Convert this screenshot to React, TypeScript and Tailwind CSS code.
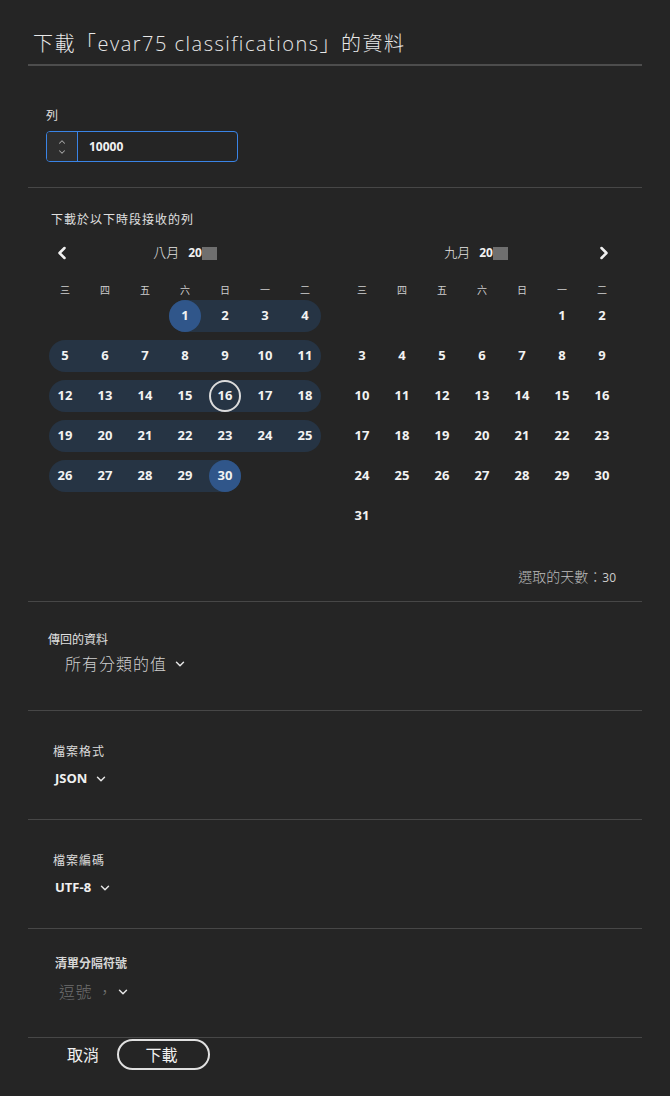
import { ChevronLeft, ChevronRight, ChevronDown, ChevronUp } from 'lucide-react';
import clsx from 'clsx';

const cjk = { fontFamily: '"Open Sans", "Noto Sans CJK TC", sans-serif' };

const weekdays = ['三', '四', '五', '六', '日', '一', '二'];

function buildRows(startCol: number, total: number): (number | null)[][] {
  const rows: (number | null)[][] = [];
  let row: (number | null)[] = Array(startCol).fill(null);
  for (let d = 1; d <= total; d++) {
    row.push(d);
    if (row.length === 7) {
      rows.push(row);
      row = [];
    }
  }
  if (row.length) {
    while (row.length < 7) row.push(null);
    rows.push(row);
  }
  return rows;
}

function DayCell({
  day,
  inRange,
  selected,
  today,
  roundLeft,
  roundRight,
}: {
  day: number | null;
  inRange?: boolean;
  selected?: boolean;
  today?: boolean;
  roundLeft?: boolean;
  roundRight?: boolean;
}) {
  if (day === null) return <div className="h-10" />;
  return (
    <div className="relative flex h-10 items-center justify-center">
      {inRange && (
        <div
          className={clsx(
            'absolute inset-y-1 bg-[#263444]',
            roundLeft ? 'left-1 rounded-l-full' : 'left-0',
            roundRight ? 'right-1 rounded-r-full' : 'right-0'
          )}
        />
      )}
      <span
        className={clsx(
          'relative flex h-8 w-8 items-center justify-center rounded-full text-[13px] font-bold text-[#f2f2f2]',
          selected && 'bg-[#30568a]',
          today && 'border-2 border-[#dcdcdc]'
        )}
      >
        {day}
      </span>
    </div>
  );
}

function MonthHeader({ name }: { name: string }) {
  return (
    <div className="flex items-center gap-[9px]">
      <span className="text-[13px] font-light text-[#e6e6e6]">{name}</span>
      <span className="flex items-center text-[12px] font-bold text-[#f0f0f0]">
        20
        <span className="inline-block h-[13px] w-[15px] bg-[#6f6f6f]" />
      </span>
    </div>
  );
}

function Calendar({
  name,
  startCol,
  total,
  range,
  today,
  nav,
}: {
  name: string;
  startCol: number;
  total: number;
  range?: [number, number];
  today?: number;
  nav: 'left' | 'right';
}) {
  const rows = buildRows(startCol, total);
  return (
    <div className="w-[280px]">
      <div
        className={clsx(
          'relative flex h-[26px] items-center justify-center',
          nav === 'right' && 'pr-[12px]'
        )}
      >
        {nav === 'left' ? (
          <ChevronLeft className="absolute left-[7px] h-5 w-5 text-[#f0f0f0]" strokeWidth={3} />
        ) : (
          <ChevronRight className="absolute right-[8px] h-5 w-5 text-[#f0f0f0]" strokeWidth={3} />
        )}
        <MonthHeader name={name} />
      </div>
      <div className="mt-[18px] grid h-3 grid-cols-7 items-center text-center text-[10px] leading-3 text-[#cfcfcf]">
        {weekdays.map((w) => (
          <span key={w}>{w}</span>
        ))}
      </div>
      <div>
        {rows.map((row, ri) => {
          const days = row.filter((d): d is number => d !== null);
          const first = days[0];
          const last = days[days.length - 1];
          return (
            <div key={ri} className="grid grid-cols-7">
              {row.map((d, ci) => {
                const inRange = !!range && d !== null && d >= range[0] && d <= range[1];
                return (
                  <DayCell
                    key={ci}
                    day={d}
                    inRange={inRange}
                    selected={!!range && (d === range[0] || d === range[1])}
                    today={d === today}
                    roundLeft={d === first || (!!range && d === range[0])}
                    roundRight={d === last || (!!range && d === range[1])}
                  />
                );
              })}
            </div>
          );
        })}
      </div>
    </div>
  );
}

function Dropdown({ value, muted }: { value: string; muted?: boolean }) {
  return (
    <div className={clsx('flex items-center', muted ? 'gap-[3px]' : 'gap-[6px]')}>
      <span
        className={clsx(
          'text-[16px] font-light',
          muted ? 'text-[#707070] tracking-[0.5px]' : 'text-[#cfcfcf] tracking-[1px]'
        )}
      >
        {value}
      </span>
      <ChevronDown className="h-[14px] w-[14px] text-[#e6e6e6]" strokeWidth={2.5} />
    </div>
  );
}

function Select({ value }: { value: string }) {
  return (
    <div className="flex items-center gap-[7px]">
      <span className="text-[13px] font-bold text-[#f0f0f0]">{value}</span>
      <ChevronDown className="h-[14px] w-[14px] text-[#e6e6e6]" strokeWidth={2.5} />
    </div>
  );
}

export default function App() {
  return (
    <div className="min-h-[1096px] bg-[#252525] text-[#e6e6e6]" style={cjk}>
      <div className="mx-[28px]">
        {/* Title */}
        <div className="border-b-2 border-[#4d4d4d] pb-[6px] pl-[5px] pt-[30px]">
          <h1 className="text-[20px] font-light leading-[28px] tracking-[1.5px] text-[#e8e8e8]">
            下載「evar75 classifications」的資料
          </h1>
        </div>

        {/* Rows */}
        <div className="border-b border-[#474747] pb-[25px] pl-[18px] pt-[42px]">
          <div className="text-[12px] leading-4 text-[#e0e0e0]">列</div>
          <div className="mt-[7px] flex h-[31px] w-[192px] overflow-hidden rounded-[4px] border border-[#3a84e6]">
            <div className="flex w-[31px] flex-col items-center justify-center border-r border-[#3a84e6] bg-[#2e2e2e]">
              <ChevronUp className="h-[10px] w-[10px] text-[#a8a8a8]" strokeWidth={2.5} />
              <ChevronDown className="h-[10px] w-[10px] text-[#a8a8a8]" strokeWidth={2.5} />
            </div>
            <div className="flex items-center pl-[11px] text-[12px] font-bold text-[#f2f2f2]">10000</div>
          </div>
        </div>

        {/* Date range */}
        <div className="border-b border-[#474747] pb-[14px] pt-[24px]">
          <div className="pl-[23px] text-[12px] leading-4 tracking-[1px] text-[#e0e0e0]">下載於以下時段接收的列</div>
          <div className="mt-[12px] flex gap-[17px] pl-[17px]">
            <Calendar name="八月" startCol={3} total={30} range={[1, 30]} today={16} nav="left" />
            <Calendar name="九月" startCol={5} total={31} nav="right" />
          </div>
          <div className="mt-[30px] flex items-baseline justify-end pr-[26px]">
            <span className="text-[14px] font-light text-[#bdbdbd]">選取的天數：</span>
            <span className="text-[12px] text-[#cfcfcf]">30</span>
          </div>
        </div>

        {/* Returned data */}
        <div className="h-[109px] border-b border-[#474747] pl-[20px] pt-[30px]">
          <div className="text-[12px] leading-4 text-[#e0e0e0]">傳回的資料</div>
          <div className="mt-[4px] pl-[17px]">
            <Dropdown value="所有分類的值" />
          </div>
        </div>

        {/* File format */}
        <div className="h-[109px] border-b border-[#474747] pl-[25px] pt-[33px]">
          <div className="text-[12px] leading-4 tracking-[1px] text-[#dcdcdc]">檔案格式</div>
          <div className="mt-[9px] pl-[2px]">
            <Select value="JSON" />
          </div>
        </div>

        {/* Encoding */}
        <div className="h-[109px] border-b border-[#474747] pl-[25px] pt-[33px]">
          <div className="text-[12px] leading-4 tracking-[1px] text-[#dcdcdc]">檔案編碼</div>
          <div className="mt-[9px] pl-[2px]">
            <Select value="UTF-8" />
          </div>
        </div>

        {/* Delimiter */}
        <div className="h-[109px] border-b border-[#474747] pl-[27px] pt-[27px]">
          <div className="text-[12px] font-bold leading-4 text-[#d6d6d6]">清單分隔符號</div>
          <div className="mt-[8px] pl-[4px]">
            <Dropdown value="逗號 ，" muted />
          </div>
        </div>

        {/* Footer */}
        <div className="flex items-center gap-[18px] pl-[39px] pt-[1px]">
          <button className="text-[16px] text-[#f0f0f0]">取消</button>
          <button className="flex h-[31px] w-[93px] items-center justify-center rounded-full border-2 border-[#e0e0e0] pr-[4px] text-[16px] text-[#f0f0f0]">
            下載
          </button>
        </div>
      </div>
    </div>
  );
}
